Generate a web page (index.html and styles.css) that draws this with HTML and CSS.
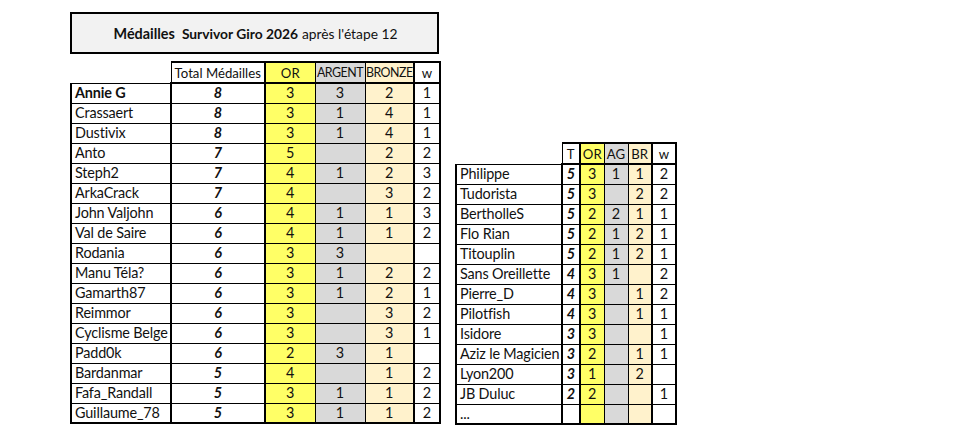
FILE: index.html
```html
<!DOCTYPE html>
<html lang="fr">
<head>
<meta charset="utf-8">
<title>Médailles Survivor Giro 2026</title>
<link rel="stylesheet" href="styles.css">
</head>
<body>
<div class="sheet">
  <div class="title">
    <span class="t-main">Médailles</span><span class="t-sub">Survivor Giro 2026</span><span class="t-rest">après l'étape 12</span>
  </div>
  <div class="tables">
    <table class="grid main">
      <colgroup>
        <col class="w-name"><col class="w-tot"><col class="w-med"><col class="w-med"><col class="w-br"><col class="w-w">
      </colgroup>
      <thead>
        <tr class="head">
          <td class="blank"></td>
          <td class="c-tot">Total Médailles</td>
          <td class="c-or">OR</td>
          <td class="c-ag tight">ARGENT</td>
          <td class="c-br tight">BRONZE</td>
          <td class="c-w">w</td>
        </tr>
      </thead>
      <tbody>
        <tr><td class="c-name strong">Annie G</td><td class="c-tot">8</td><td class="c-or">3</td><td class="c-ag">3</td><td class="c-br">2</td><td class="c-w">1</td></tr>
        <tr><td class="c-name">Crassaert</td><td class="c-tot">8</td><td class="c-or">3</td><td class="c-ag">1</td><td class="c-br">4</td><td class="c-w">1</td></tr>
        <tr><td class="c-name">Dustivix</td><td class="c-tot">8</td><td class="c-or">3</td><td class="c-ag">1</td><td class="c-br">4</td><td class="c-w">1</td></tr>
        <tr><td class="c-name">Anto</td><td class="c-tot">7</td><td class="c-or">5</td><td class="c-ag"></td><td class="c-br">2</td><td class="c-w">2</td></tr>
        <tr><td class="c-name">Steph2</td><td class="c-tot">7</td><td class="c-or">4</td><td class="c-ag">1</td><td class="c-br">2</td><td class="c-w">3</td></tr>
        <tr><td class="c-name">ArkaCrack</td><td class="c-tot">7</td><td class="c-or">4</td><td class="c-ag"></td><td class="c-br">3</td><td class="c-w">2</td></tr>
        <tr><td class="c-name">John Valjohn</td><td class="c-tot">6</td><td class="c-or">4</td><td class="c-ag">1</td><td class="c-br">1</td><td class="c-w">3</td></tr>
        <tr><td class="c-name">Val de Saire</td><td class="c-tot">6</td><td class="c-or">4</td><td class="c-ag">1</td><td class="c-br">1</td><td class="c-w">2</td></tr>
        <tr><td class="c-name">Rodania</td><td class="c-tot">6</td><td class="c-or">3</td><td class="c-ag">3</td><td class="c-br"></td><td class="c-w"></td></tr>
        <tr><td class="c-name">Manu Téla?</td><td class="c-tot">6</td><td class="c-or">3</td><td class="c-ag">1</td><td class="c-br">2</td><td class="c-w">2</td></tr>
        <tr><td class="c-name">Gamarth87</td><td class="c-tot">6</td><td class="c-or">3</td><td class="c-ag">1</td><td class="c-br">2</td><td class="c-w">1</td></tr>
        <tr><td class="c-name">Reimmor</td><td class="c-tot">6</td><td class="c-or">3</td><td class="c-ag"></td><td class="c-br">3</td><td class="c-w">2</td></tr>
        <tr><td class="c-name">Cyclisme Belge</td><td class="c-tot">6</td><td class="c-or">3</td><td class="c-ag"></td><td class="c-br">3</td><td class="c-w">1</td></tr>
        <tr><td class="c-name">Padd0k</td><td class="c-tot">6</td><td class="c-or">2</td><td class="c-ag">3</td><td class="c-br">1</td><td class="c-w"></td></tr>
        <tr><td class="c-name">Bardanmar</td><td class="c-tot">5</td><td class="c-or">4</td><td class="c-ag"></td><td class="c-br">1</td><td class="c-w">2</td></tr>
        <tr><td class="c-name">Fafa_Randall</td><td class="c-tot">5</td><td class="c-or">3</td><td class="c-ag">1</td><td class="c-br">1</td><td class="c-w">2</td></tr>
        <tr class="last"><td class="c-name">Guillaume_78</td><td class="c-tot">5</td><td class="c-or">3</td><td class="c-ag">1</td><td class="c-br">1</td><td class="c-w">2</td></tr>
      </tbody>
    </table>

    <table class="grid side">
      <colgroup>
        <col class="s-name"><col class="s-t"><col class="s-med"><col class="s-med"><col class="s-med"><col class="s-med">
      </colgroup>
      <thead>
        <tr class="head">
          <td class="blank"></td>
          <td class="c-tot">T</td>
          <td class="c-or">OR</td>
          <td class="c-ag">AG</td>
          <td class="c-br">BR</td>
          <td class="c-w">w</td>
        </tr>
      </thead>
      <tbody>
        <tr><td class="c-name">Philippe</td><td class="c-tot">5</td><td class="c-or">3</td><td class="c-ag">1</td><td class="c-br">1</td><td class="c-w">2</td></tr>
        <tr><td class="c-name">Tudorista</td><td class="c-tot">5</td><td class="c-or">3</td><td class="c-ag"></td><td class="c-br">2</td><td class="c-w">2</td></tr>
        <tr><td class="c-name">BertholleS</td><td class="c-tot">5</td><td class="c-or">2</td><td class="c-ag">2</td><td class="c-br">1</td><td class="c-w">1</td></tr>
        <tr><td class="c-name">Flo Rian</td><td class="c-tot">5</td><td class="c-or">2</td><td class="c-ag">1</td><td class="c-br">2</td><td class="c-w">1</td></tr>
        <tr><td class="c-name">Titouplin</td><td class="c-tot">5</td><td class="c-or">2</td><td class="c-ag">1</td><td class="c-br">2</td><td class="c-w">1</td></tr>
        <tr><td class="c-name">Sans Oreillette</td><td class="c-tot">4</td><td class="c-or">3</td><td class="c-ag">1</td><td class="c-br"></td><td class="c-w">2</td></tr>
        <tr><td class="c-name">Pierre_D</td><td class="c-tot">4</td><td class="c-or">3</td><td class="c-ag"></td><td class="c-br">1</td><td class="c-w">2</td></tr>
        <tr><td class="c-name">Pilotfish</td><td class="c-tot">4</td><td class="c-or">3</td><td class="c-ag"></td><td class="c-br">1</td><td class="c-w">1</td></tr>
        <tr><td class="c-name">Isidore</td><td class="c-tot">3</td><td class="c-or">3</td><td class="c-ag"></td><td class="c-br"></td><td class="c-w">1</td></tr>
        <tr><td class="c-name">Aziz le Magicien</td><td class="c-tot">3</td><td class="c-or">2</td><td class="c-ag"></td><td class="c-br">1</td><td class="c-w">1</td></tr>
        <tr><td class="c-name">Lyon200</td><td class="c-tot">3</td><td class="c-or">1</td><td class="c-ag"></td><td class="c-br">2</td><td class="c-w"></td></tr>
        <tr><td class="c-name">JB Duluc</td><td class="c-tot">2</td><td class="c-or">2</td><td class="c-ag"></td><td class="c-br"></td><td class="c-w">1</td></tr>
        <tr class="last"><td class="c-name">...</td><td class="c-tot"></td><td class="c-or"></td><td class="c-ag"></td><td class="c-br"></td><td class="c-w"></td></tr>
      </tbody>
    </table>
  </div>
</div>
</body>
</html>
```

FILE: styles.css
```css
html, body {
  margin: 0;
  padding: 0;
  background: #ffffff;
}

body {
  font-family: "Lato", "Liberation Sans", sans-serif;
  color: #111111;
}

.sheet {
  display: flex;
  flex-direction: column;
  align-items: flex-start;
  padding: 12px 0 0 70px;
}

.title {
  box-sizing: border-box;
  width: 369px;
  height: 42px;
  border: 2px solid #000;
  background: #f2f2f2;
  display: flex;
  align-items: center;
  justify-content: center;
  font-size: 13.8px;
  white-space: pre;
  padding-left: 2px;
  padding-top: 1px;
}

.t-main {
  font-weight: 700;
  font-size: 14.4px;
  margin-right: 7px;
}

.t-sub {
  font-weight: 700;
  margin-right: 4px;
}

.tables {
  display: flex;
  align-items: flex-start;
  gap: 14px;
  margin-top: 7px;
}

.grid {
  border-collapse: collapse;
  table-layout: fixed;
  font-size: 14.4px;
}

.grid.main { width: 369px; }
.grid.side { width: 220px; }

.grid tr {
  height: 20px;
}

.grid .head {
  height: 21px;
}

.grid td {
  padding: 0;
  border: 1px solid #000;
  text-align: center;
  vertical-align: middle;
  white-space: nowrap;
  line-height: 16px;
}

.grid .head td {
  border-top: 2px solid #000;
  border-bottom: 2px solid #000;
  font-size: 13.2px;
}

.grid .head td.tight {
  font-size: 12.4px;
  letter-spacing: -0.5px;
}

.grid td.blank {
  border: none;
}

.grid .last td {
  border-bottom: 2px solid #000;
}

.main .w-name { width: 100px; }
.main .w-tot { width: 94px; }
.main .w-med { width: 50px; }
.main .w-br { width: 49px; }
.main .w-w { width: 26px; }

.side { margin-top: 81px; }
.side .s-name { width: 106px; }
.side .s-t { width: 18px; }
.side .s-med { width: 24px; }

.grid td.c-name {
  text-align: left;
  padding-left: 3px;
  letter-spacing: -0.15px;
  border-left: 2px solid #000;
  border-right: 2px solid #000;
}

.grid td.strong { font-weight: 700; }

.grid td.c-tot {
  border-right: 2px solid #000;
  background: #ffffff;
}

.grid tbody td.c-tot {
  font-weight: 700;
  font-style: italic;
}

.grid td.c-or { background: #ffff66; }
.grid td.c-ag { background: #d9d9d9; }
.grid td.c-br {
  background: #fff2cc;
  border-right: 2px solid #000;
}
.grid td.c-w {
  background: #ffffff;
  border-right: 2px solid #000;
}
```
